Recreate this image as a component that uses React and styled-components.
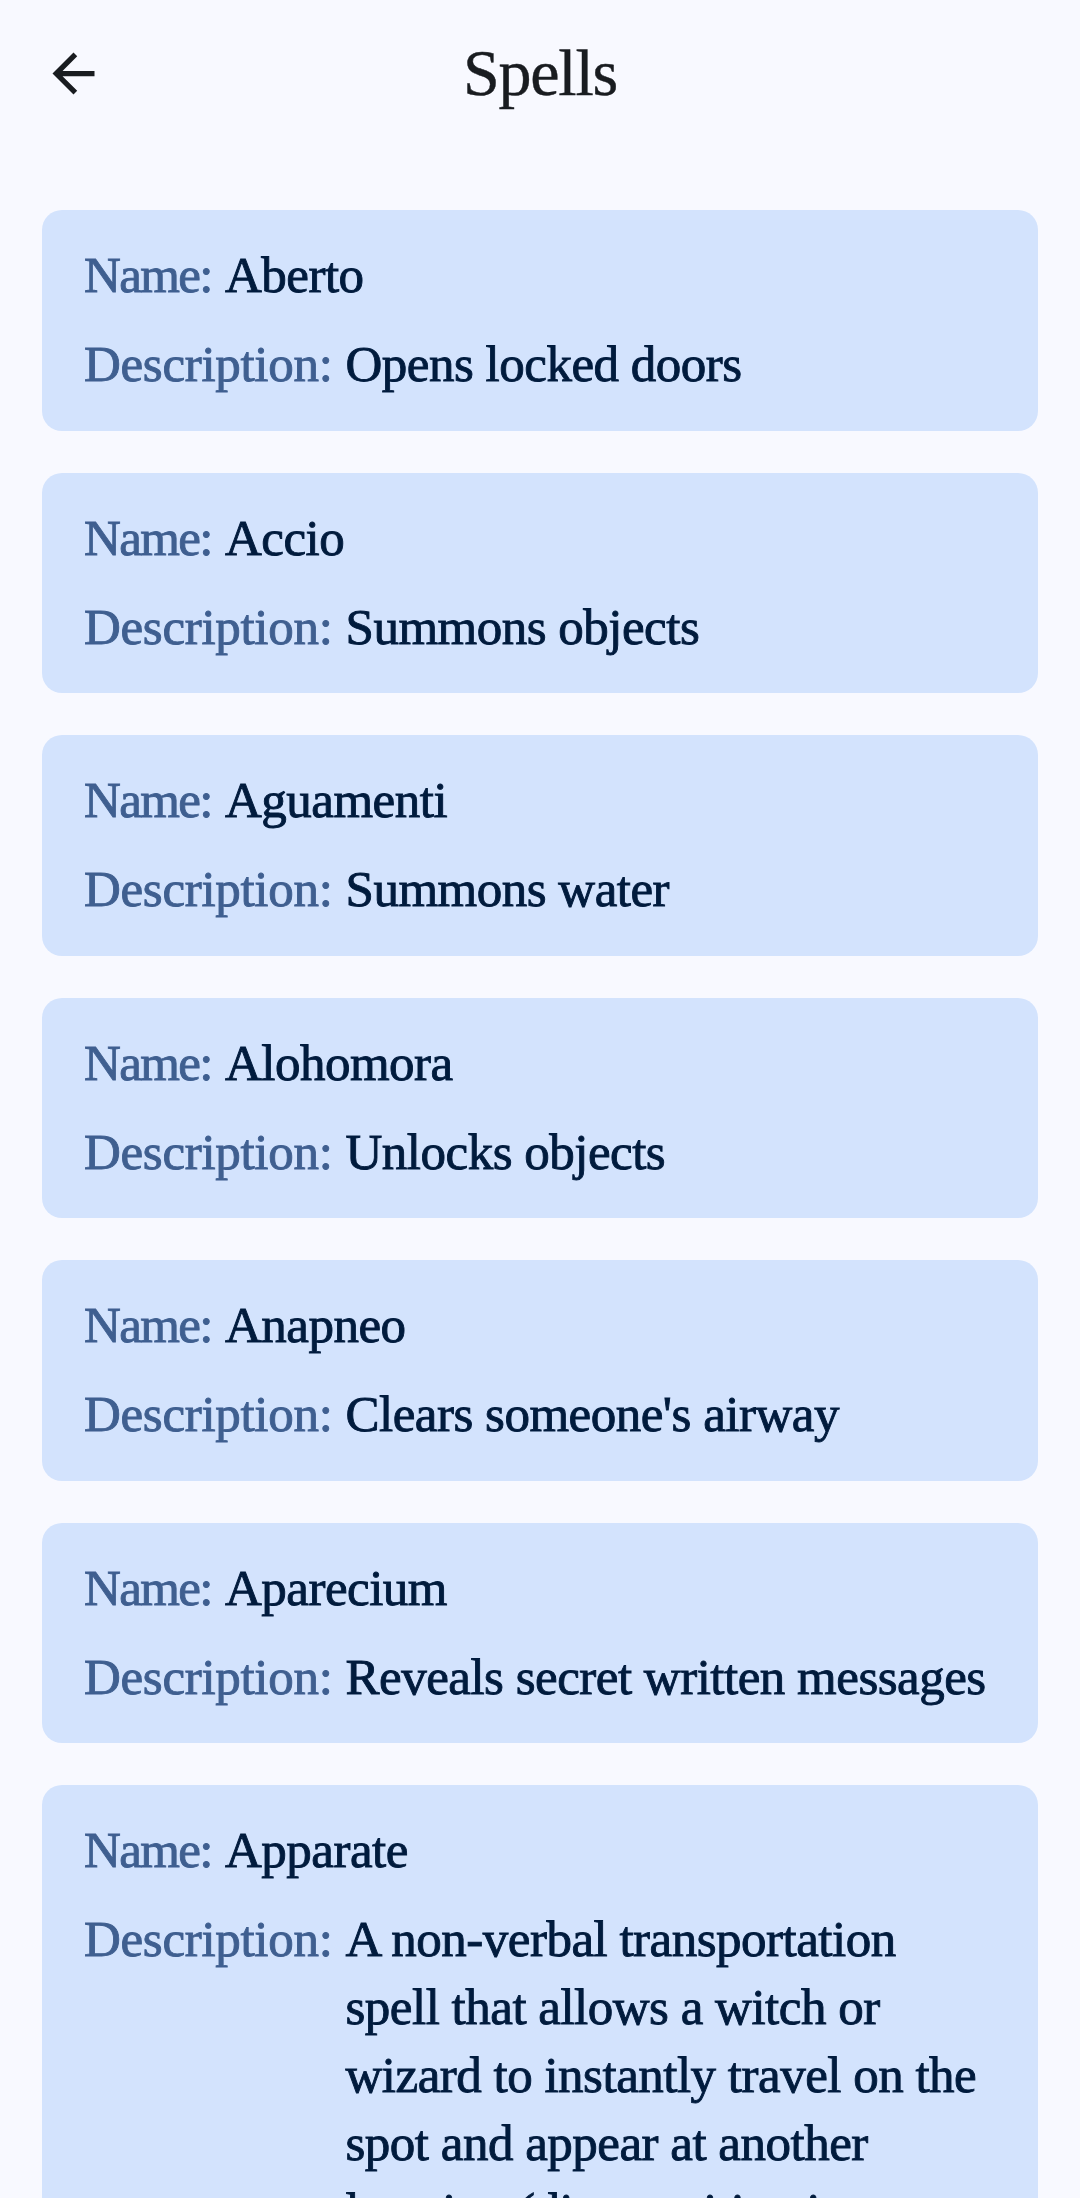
import React from "react";
import styled, { createGlobalStyle } from "styled-components";

const spells = [
  ["Aberto", "Opens locked doors"],
  ["Accio", "Summons objects"],
  ["Aguamenti", "Summons water"],
  ["Alohomora", "Unlocks objects"],
  ["Anapneo", "Clears someone's airway"],
  ["Aparecium", "Reveals secret written messages"],
  ["Apparate", "A non-verbal transportation spell that allows a witch or wizard to instantly travel on the spot and appear at another location (disapparition is required first)"],
];

const Global = createGlobalStyle`
  html, body { margin: 0; padding: 0; height: 2198px; overflow: hidden; background: #f8f9ff; }
`;
const Page = styled.div`
  height: 2198px; overflow: hidden; background: #f8f9ff; box-sizing: border-box;
  font-family: "Liberation Serif", serif;
`;
const Header = styled.header`
  height: 146px; display: grid; grid-template-columns: 146px 1fr 146px; align-items: center;
`;
const Back = styled.button`
  width: 146px; height: 146px; padding: 0 0 0 42px; border: 0; background: none; color: #191c20;
  display: flex; align-items: center; justify-content: flex-start;
`;
const Title = styled.h1`
  margin: 0; text-align: center; font-size: 66px; font-weight: 400; color: #191c20; letter-spacing: -1.2px; line-height: 1;
  -webkit-text-stroke: 0.4px currentColor;
`;
const List = styled.main`
  display: flex; flex-direction: column; gap: 42px; padding: 64px 42px 0;
`;
const Card = styled.article`
  background: #d3e3fd; border-radius: 20px; padding: 31px 42px 32.5px;
  display: flex; flex-direction: column; gap: 21px;
`;
const Row = styled.div`
  display: flex; gap: 13px; font-size: 51px; line-height: 68px; -webkit-text-stroke: 0.9px currentColor;
`;
const Label = styled.span`
  color: #3f5f90; flex: none; letter-spacing: ${(p) => (p.$tight ? "-1.6px" : "-0.3px")};
`;
const Value = styled.span`color: #001b3d; flex: 1; letter-spacing: -0.5px;`;

export default function App() {
  return (
    <Page>
      <Global />
      <Header>
        <Back aria-label="Back">
          <svg width="63" height="63" viewBox="0 0 24 24" fill="currentColor">
            <path d="M20 11H7.83l5.59-5.59L12 4l-8 8 8 8 1.41-1.41L7.83 13H20v-2z" />
          </svg>
        </Back>
        <Title>Spells</Title>
      </Header>
      <List>
        {spells.map(([n, d]) => (
          <Card key={n}>
            <Row><Label $tight>Name:</Label><Value>{n}</Value></Row>
            <Row><Label>Description:</Label><Value>{d}</Value></Row>
          </Card>
        ))}
      </List>
    </Page>
  );
}
